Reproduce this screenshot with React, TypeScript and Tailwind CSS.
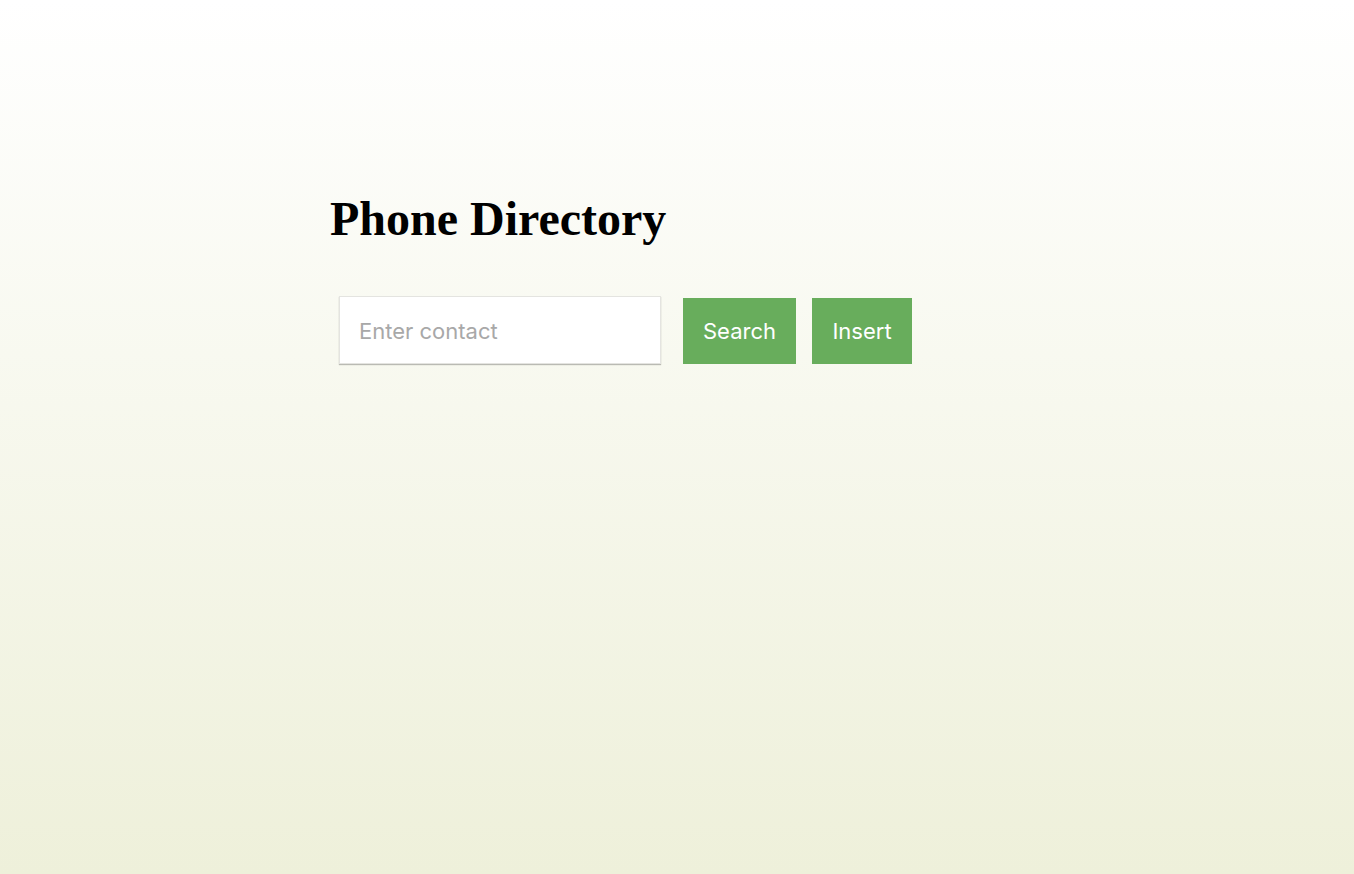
export default function App() {
  return (
    <div className="min-h-screen w-full bg-gradient-to-b from-[#ffffff] to-[#eef0da] pl-[330px] pt-[192px]">
      <h1 className="font-['Liberation_Serif',serif] text-[48px] leading-[53px] font-bold text-black">
        Phone Directory
      </h1>
      <div className="mt-[51px] flex items-start pl-[9px]">
        <input
          type="text"
          placeholder="Enter contact"
          className="h-[68px] w-[322px] border border-[#e4e4e0] bg-white px-[19px] pt-[2px] font-['Inter',sans-serif] text-[22px] text-black shadow-[0_1px_1px_rgba(0,0,0,0.25)] outline-none placeholder:text-[#a8a8a8]"
        />
        <button className="ml-[22px] mt-[2px] h-[66px] w-[113px] bg-[#68ad5c] pt-[1px] font-['Inter',sans-serif] text-[22px] text-white">
          Search
        </button>
        <button className="ml-[16px] mt-[2px] h-[66px] w-[100px] bg-[#68ad5c] pt-[1px] font-['Inter',sans-serif] text-[22px] text-white">
          Insert
        </button>
      </div>
    </div>
  );
}
